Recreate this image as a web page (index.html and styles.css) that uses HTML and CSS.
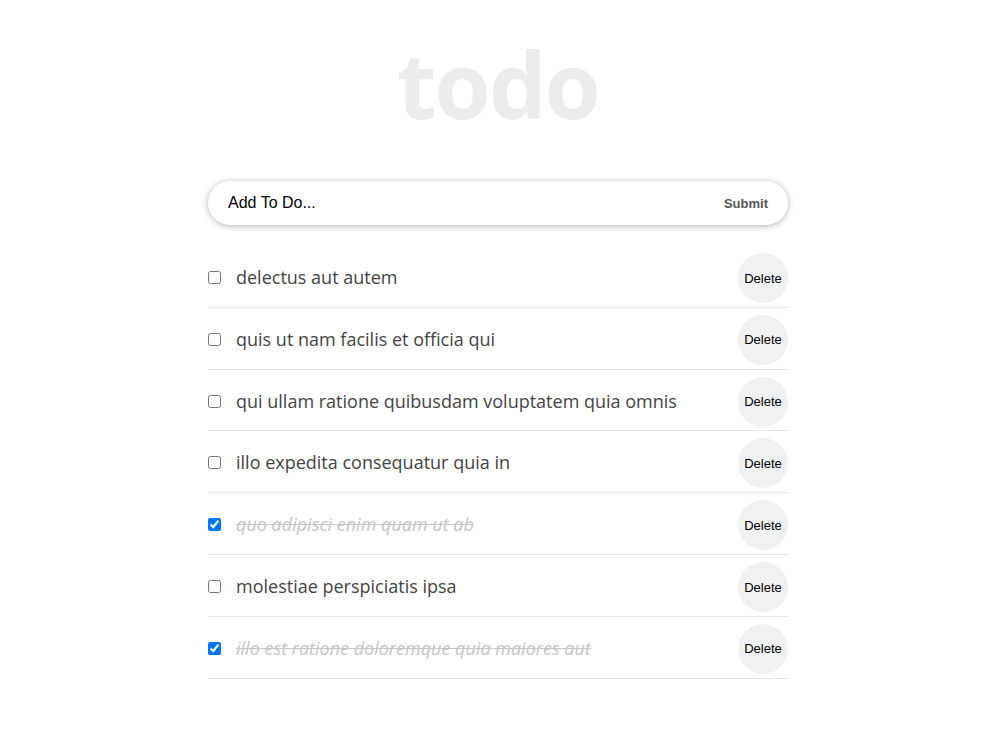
FILE: index.html
```
<!DOCTYPE html>
<html lang="en">
<head>
<meta charset="utf-8">
<title>todo</title>
<link rel="stylesheet" href="styles.css">
</head>
<body>
<main class="app">
  <h1 class="title">todo</h1>
  <form class="add-form">
    <input class="add-input" type="text" placeholder="Add To Do...">
    <button class="submit-btn" type="button">Submit</button>
  </form>
  <ul class="todo-list">
    <li class="todo-item"><input class="check" type="checkbox"><span class="label">delectus aut autem</span><button class="delete-btn" type="button">Delete</button></li>
    <li class="todo-item"><input class="check" type="checkbox"><span class="label">quis ut nam facilis et officia qui</span><button class="delete-btn" type="button">Delete</button></li>
    <li class="todo-item"><input class="check" type="checkbox"><span class="label">qui ullam ratione quibusdam voluptatem quia omnis</span><button class="delete-btn" type="button">Delete</button></li>
    <li class="todo-item"><input class="check" type="checkbox"><span class="label">illo expedita consequatur quia in</span><button class="delete-btn" type="button">Delete</button></li>
    <li class="todo-item done"><input class="check" type="checkbox" checked><span class="label">quo adipisci enim quam ut ab</span><button class="delete-btn" type="button">Delete</button></li>
    <li class="todo-item"><input class="check" type="checkbox"><span class="label">molestiae perspiciatis ipsa</span><button class="delete-btn" type="button">Delete</button></li>
    <li class="todo-item done"><input class="check" type="checkbox" checked><span class="label">illo est ratione doloremque quia maiores aut</span><button class="delete-btn" type="button">Delete</button></li>
  </ul>
</main>
</body>
</html>
```
FILE: styles.css
```
html, body {
  margin: 0;
  padding: 0;
  background: #fff;
}
body {
  padding-right: 3px;
  font-family: "Open Sans", "Noto Sans", sans-serif;
}
.app {
  width: 580px;
  margin: 0 auto;
  padding-top: 24px;
}
.title {
  margin: 0;
  text-align: center;
  font-family: "Open Sans", sans-serif;
  font-weight: 700;
  font-size: 91px;
  line-height: 120px;
  letter-spacing: -2px;
  color: #ececec;
}
.add-form {
  margin-top: 37px;
  height: 44px;
  border-radius: 23px;
  box-shadow: 0 1px 6px rgba(0, 0, 0, 0.3);
  display: flex;
  align-items: center;
  padding: 0 20px;
  background: #fff;
}
.add-input {
  flex: 1;
  border: none;
  outline: none;
  font-family: "Liberation Sans", Arial, sans-serif;
  font-size: 16px;
  color: #000;
  padding: 0;
  background: transparent;
}
.add-input::placeholder {
  color: #000;
  opacity: 1;
}
.submit-btn {
  border: none;
  background: transparent;
  font-family: "Liberation Sans", Arial, sans-serif;
  font-weight: 700;
  font-size: 13px;
  color: #555;
  padding: 0;
}
.todo-list {
  list-style: none;
  margin: 21px 0 0;
  padding: 0;
}
.todo-item {
  display: flex;
  align-items: center;
  padding: 7px 0 3.83px;
  border-bottom: 1px solid #e6e6e6;
}
.check {
  margin: 0 0 1px;
  width: 13px;
  height: 13px;
}
.label {
  flex: 1;
  margin-left: 15px;
  margin-bottom: 2px;
  font-family: "Open Sans", sans-serif;
  font-size: 18px;
  color: #444;
}
.done .label {
  font-style: italic;
  color: #c6c6c6;
  text-decoration: line-through;
}
.delete-btn {
  width: 50px;
  height: 50px;
  border-radius: 50%;
  border: none;
  background: #f0f1f3;
  font-family: "Liberation Sans", Arial, sans-serif;
  font-size: 13px;
  color: #000;
  padding: 0;
}
```
